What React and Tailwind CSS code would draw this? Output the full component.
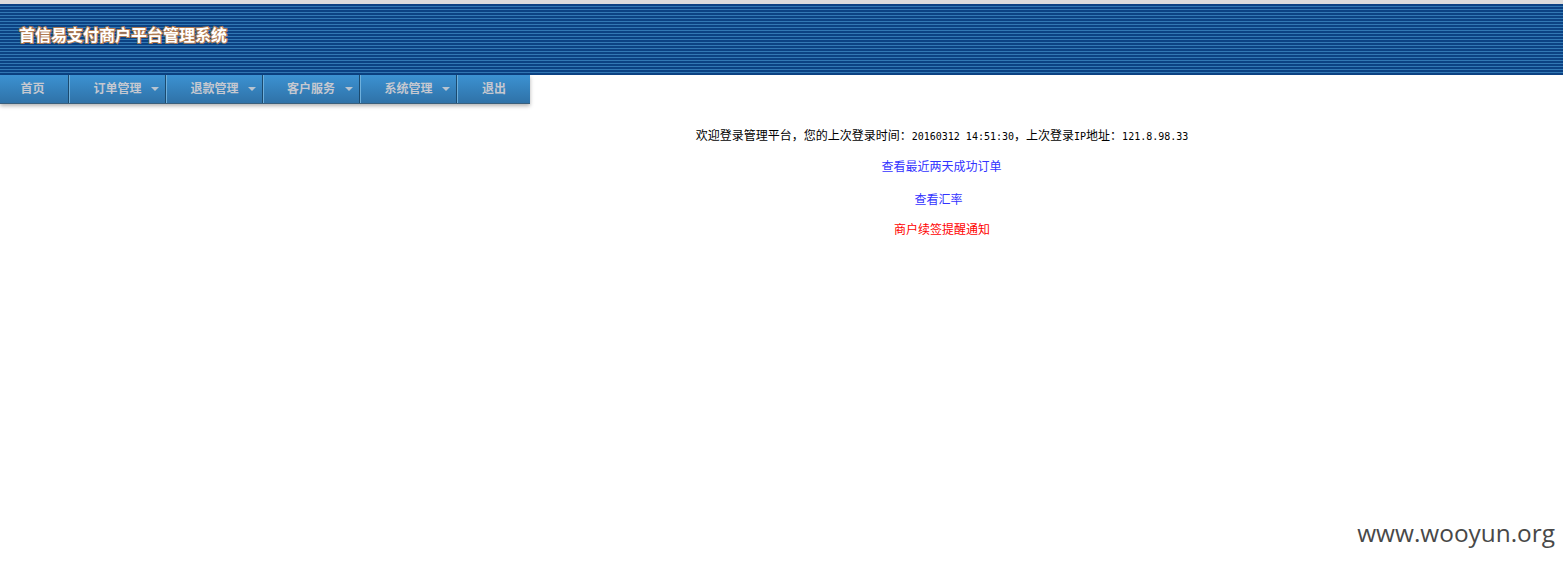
const CJK = "font-['Noto_Sans_CJK_SC','Liberation_Sans',sans-serif]";
const MONO = "font-['DejaVu_Sans_Mono',monospace] text-[10px]";

const MENU = [
  { label: "首页", width: "w-[69px]", pad: "pr-[3px]" },
  { label: "订单管理", width: "w-[97px]", arrow: true },
  { label: "退款管理", width: "w-[97px]", arrow: true },
  { label: "客户服务", width: "w-[97px]", pad: "pr-[1px]", arrow: true },
  { label: "系统管理", width: "w-[97px]", arrow: true },
  { label: "退出", width: "w-[73px]" },
];

function MenuItem({ label, width, pad, arrow }) {
  return (
    <div
      className={`${width} ${pad || ""} h-full relative flex items-center justify-center border-l border-l-[#6fb0dc] first:border-l-0 border-r border-r-[#1b4a6e] last:border-r-0`}
    >
      <span className="text-[12px] font-bold leading-none text-[#c5c8d0] mb-[3px]">{label}</span>
      {arrow && (
        <span className="absolute right-[6px] top-[12px] w-0 h-0 border-x-[4px] border-x-transparent border-t-[4px] border-t-[#b8c4d0]" />
      )}
    </div>
  );
}

export default function App() {
  return (
    <div className={`relative h-[563px] bg-white overflow-hidden ${CJK}`}>
      <div className="h-[75px] border-t-[4px] border-t-[#dcdcdc] bg-[repeating-linear-gradient(180deg,#0c4283_0px,#0c4283_2px,#3278b4_2px,#3278b4_3px)] flex items-center pl-[19px]">
        <h1 className="text-[16px] font-bold leading-none text-white [-webkit-text-stroke:2px_#b07a50] [paint-order:stroke_fill] mb-[12px]">
          首信易支付商户平台管理系统
        </h1>
      </div>

      <nav className="flex w-[530px] h-[29px] bg-gradient-to-b from-[#3c92d2] to-[#2f72a8] border-b border-b-[#3a5f7c] shadow-[0_2px_4px_rgba(0,0,0,0.3)]">
        {MENU.map((m) => (
          <MenuItem key={m.label} {...m} />
        ))}
      </nav>

      <div className="pl-[321px] pt-[23px] text-center text-[12px] leading-[16px]">
        <p className="text-black">
          欢迎登录管理平台，您的上次登录时间：
          <span className={MONO}>20160312 14:51:30</span>
          ，上次登录
          <span className={MONO}>IP</span>
          地址：
          <span className={MONO}>121.8.98.33</span>
        </p>
        <p className="mt-[13px] pr-[1px] text-[#3333ff]">查看最近两天成功订单</p>
        <p className="mt-[17px] pr-[7px] text-[#3333ff]">查看汇率</p>
        <p className="mt-[14px] text-[#ff0000]">商户续签提醒通知</p>
      </div>

      <div className="absolute right-[8px] top-[516px] font-['Open_Sans',sans-serif] text-[24.4px] leading-[34px] text-[#484848]">
        www.wooyun.org
      </div>
    </div>
  );
}
